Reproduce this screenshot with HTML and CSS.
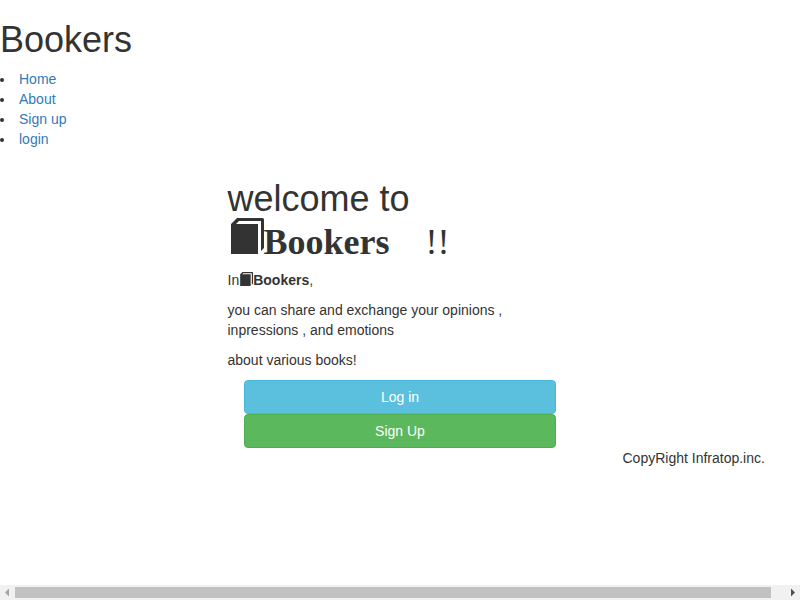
FILE: index.html
```html
<!DOCTYPE html>
<html lang="en">
<head>
<meta charset="utf-8">
<title>Bookers</title>
<link rel="stylesheet" href="styles.css">
</head>
<body>
<svg class="defs" width="0" height="0"><symbol id="book" viewBox="0 0 36 36"><path d="M3 6 9 0H34.500Q36 0 36 1.500V30L33 33V3H11L8 6H30V36H3Z"/></symbol></svg>
<div class="page">
  <header>
    <h1>Bookers</h1>
    <ul class="nav">
      <li><a href="#">Home</a></li>
      <li><a href="#">About</a></li>
      <li><a href="#">Sign up</a></li>
      <li><a href="#">login</a></li>
    </ul>
  </header>
  <main class="intro">
    <h1 class="welcome">welcome to</h1>
    <div class="brand"><svg class="book"><use href="#book"/></svg><strong>Bookers</strong><span class="marks">!!</span></div>
    <p class="in">In<svg class="book small"><use href="#book"/></svg><strong>Bookers</strong>,</p>
    <p>you can share and exchange your opinions , inpressions , and emotions</p>
    <p>about various books!</p>
    <div class="actions">
      <a class="btn info" href="#">Log in</a>
      <a class="btn success" href="#">Sign Up</a>
    </div>
  </main>
  <footer>CopyRight Infratop.inc.</footer>
</div>
<div class="scrollbar">
  <svg class="arrow off" viewBox="0 0 15 15"><path d="M9 3.500v8L5 7.500z"/></svg>
  <div class="thumb"></div>
  <svg class="arrow" viewBox="0 0 15 15"><path d="M6 3.500v8l4-4z"/></svg>
</div>
</body>
</html>
```
FILE: styles.css
```css
* { box-sizing: border-box; }
body {
  margin: 0;
  height: 600px;
  display: flex;
  flex-direction: column;
  overflow: hidden;
  background: #fff;
  color: #333;
  font: 14px/20px "Liberation Sans", Arial, sans-serif;
}
.defs { display: block; flex: none; height: 0; }
.page { flex: 1; min-height: 0; display: flow-root; }
a { color: #337ab7; text-decoration: none; }
h1 { margin: 20px 0 10px; font-size: 36px; font-weight: 500; line-height: 39px; }
p { margin: 0 0 10px; }
.nav { margin: 0; padding: 0; list-style-position: inside; }
.intro { width: 345px; margin: 30px 0 0 227.5px; }
.welcome { margin: 0 0 1px; }
.brand {
  display: flex;
  height: 41px;
  margin-bottom: 10px;
  font: 36px/46px "Liberation Serif", "Times New Roman", serif;
}
.book { flex: none; width: 36px; height: 36px; margin-top: -1px; fill: currentColor; }
.book.small { width: 14px; height: 14px; margin-top: 2px; }
.marks { margin-left: 36px; }
.in { display: flex; }
.actions { width: 312px; margin-left: 16.5px; }
.btn {
  display: block;
  height: 34px;
  padding: 6px 12px;
  border: 1px solid;
  border-radius: 4px;
  color: #fff;
  text-align: center;
}
.info { background: #5bc0de; border-color: #46b8da; }
.success { background: #5cb85c; border-color: #4cae4c; }
footer { margin-left: 622.5px; }
.scrollbar { flex: none; display: flex; height: 15px; background: #f1f1f1; }
.arrow { width: 15px; height: 15px; fill: #505050; }
.arrow.off { fill: #a3a3a3; }
.thumb { width: 756px; height: 11px; margin: 2px 14px 0 0; background: #c1c1c1; }
```
